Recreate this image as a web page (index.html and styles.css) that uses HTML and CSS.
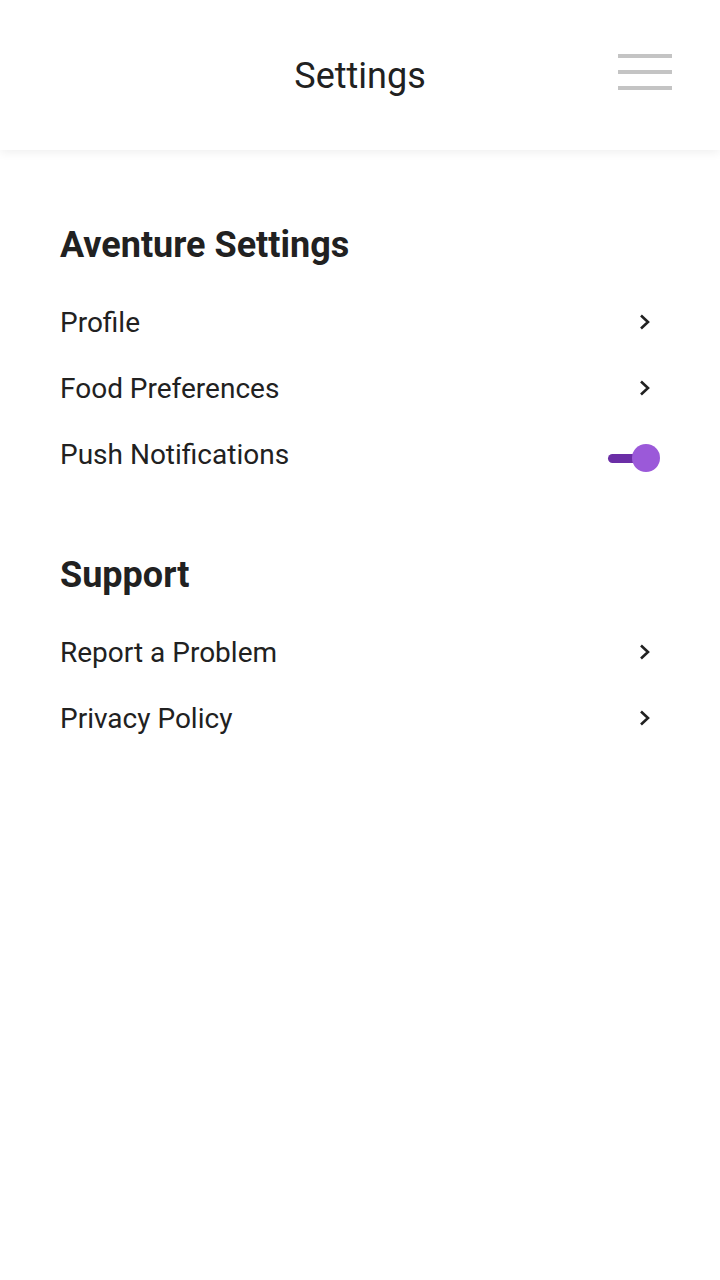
FILE: index.html
```html
<!DOCTYPE html>
<html lang="en">
<head>
<meta charset="utf-8">
<title>Settings</title>
<link rel="stylesheet" href="styles.css">
</head>
<body>
<header class="topbar">
  <h1 class="title">Settings</h1>
  <button class="menu" aria-label="Menu"><span></span><span></span><span></span></button>
</header>
<main class="content">
  <section class="section">
    <h2 class="section-title">Aventure Settings</h2>
    <div class="row"><span class="label">Profile</span><svg class="chev" viewBox="0 0 24 24"><polyline points="5,4.5 12,11 5,17.5"/></svg></div>
    <div class="row"><span class="label">Food Preferences</span><svg class="chev" viewBox="0 0 24 24"><polyline points="5,4.5 12,11 5,17.5"/></svg></div>
    <div class="row"><span class="label">Push Notifications</span><span class="toggle"><span class="track"></span><span class="thumb"></span></span></div>
  </section>
  <section class="section">
    <h2 class="section-title">Support</h2>
    <div class="row"><span class="label">Report a Problem</span><svg class="chev" viewBox="0 0 24 24"><polyline points="5,4.5 12,11 5,17.5"/></svg></div>
    <div class="row"><span class="label">Privacy Policy</span><svg class="chev" viewBox="0 0 24 24"><polyline points="5,4.5 12,11 5,17.5"/></svg></div>
  </section>
</main>
</body>
</html>
```
FILE: styles.css
```css
* { box-sizing: border-box; }
html, body { margin: 0; padding: 0; background: #ffffff; }
body {
  font-family: Roboto, "Liberation Sans", sans-serif;
  color: #212121;
  width: 720px;
  min-height: 1280px;
}
.topbar {
  height: 150px;
  display: flex;
  align-items: center;
  justify-content: center;
  position: relative;
  background: #fff;
  box-shadow: 0 2px 10px rgba(0, 0, 0, 0.07);
}
.title {
  margin: 0;
  padding-top: 2px;
  font-size: 36px;
  font-weight: 400;
  line-height: 44px;
  color: #212121;
}
.menu {
  position: absolute;
  right: 48px;
  top: 54px;
  width: 54px;
  height: 36px;
  padding: 0;
  border: 0;
  background: none;
  display: flex;
  flex-direction: column;
  justify-content: space-between;
}
.menu span {
  display: block;
  height: 4px;
  width: 100%;
  background: #c4c4c4;
}
.content {
  padding: 73px 60px 0 60px;
  display: flex;
  flex-direction: column;
  gap: 65px;
}
.section { display: flex; flex-direction: column; }
.section-title {
  margin: 0 0 23px 0;
  font-size: 36px;
  font-weight: 700;
  line-height: 44px;
  color: #212121;
}
.row {
  height: 66px;
  display: flex;
  align-items: center;
  justify-content: space-between;
}
.label {
  font-size: 28px;
  line-height: 34px;
  color: #212121;
}
.chev {
  width: 24px;
  height: 24px;
  fill: none;
  stroke: #212121;
  stroke-width: 2.6;
}
.toggle {
  position: relative;
  width: 52px;
  height: 28px;
  margin-top: 6px;
  display: flex;
  align-items: center;
}
.track {
  display: block;
  width: 40px;
  height: 9px;
  border-radius: 5px;
  background: #6b2ea6;
}
.thumb {
  position: absolute;
  right: 0;
  top: 0;
  width: 28px;
  height: 28px;
  border-radius: 50%;
  background: #9b59d9;
}
```
